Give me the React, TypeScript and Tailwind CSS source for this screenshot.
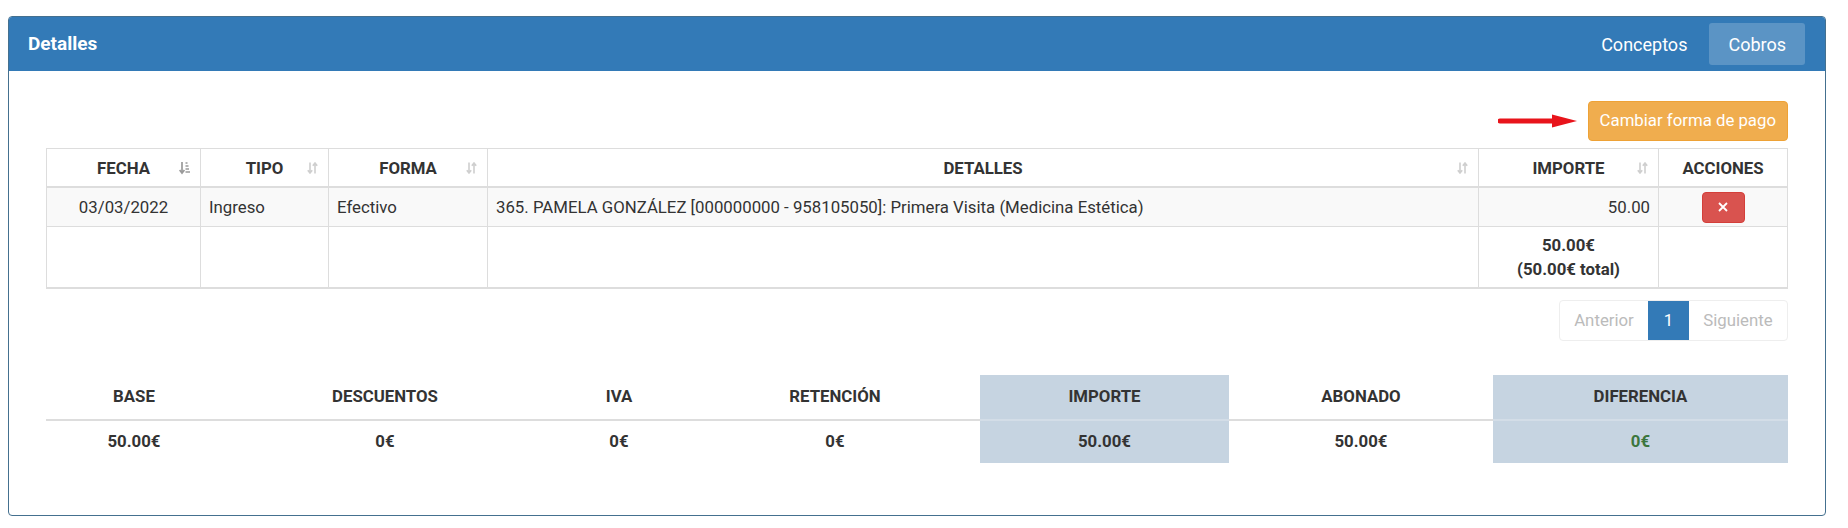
import React from 'react';

const font = "font-['Roboto','Liberation_Sans',sans-serif]";

function SortBoth() {
  return (
    <svg width="11" height="14" viewBox="0 0 11 14" className="text-[#cfcfcf]">
      <path d="M3 1.5v10M0.8 9.3L3 12l2.2-2.7" fill="none" stroke="currentColor" strokeWidth="1.6" />
      <path d="M8 12.5v-10M5.8 4.7L8 2l2.2 2.7" fill="none" stroke="currentColor" strokeWidth="1.6" />
    </svg>
  );
}

function SortAsc() {
  return (
    <svg width="11" height="14" viewBox="0 0 11 14" className="text-[#9a9a9a]">
      <path d="M3 1v10.5M0.6 9L3 12.2 5.4 9" fill="none" stroke="currentColor" strokeWidth="1.7" />
      <path d="M6.5 2h2M6.5 5h3M6.5 8h3.5M6.5 11h4.5" fill="none" stroke="currentColor" strokeWidth="1.3" />
    </svg>
  );
}

function Th({ label, sort, className = '' }: { label: string; sort?: 'both' | 'asc'; className?: string }) {
  return (
    <th className={`relative border border-[#ddd] border-b-2 pt-[7px] pb-[6px] px-[8px] text-center font-bold ${className}`}>
      {label}
      {sort && (
        <span className="absolute right-[10px] top-[12px]">
          {sort === 'asc' ? <SortAsc /> : <SortBoth />}
        </span>
      )}
    </th>
  );
}

const resumen = [
  { label: 'BASE', value: '50.00€', w: 'w-[176px]' },
  { label: 'DESCUENTOS', value: '0€', w: 'w-[326px]' },
  { label: 'IVA', value: '0€', w: 'w-[142px]' },
  { label: 'RETENCIÓN', value: '0€', w: 'w-[290px]' },
  { label: 'IMPORTE', value: '50.00€', w: 'w-[249px]', hl: true },
  { label: 'ABONADO', value: '50.00€', w: 'w-[264px]' },
  { label: 'DIFERENCIA', value: '0€', w: 'w-[295px]', hl: true, green: true },
];

export default function App() {
  return (
    <div className={`${font} min-h-[528px] bg-white pt-4 pl-2 pr-[22px] text-[16.8px] text-[#333]`}>
      <div className="overflow-hidden rounded-[4px] border border-[#44708f]">
        {/* cabecera */}
        <div className="flex h-[54px] items-center justify-between bg-[#337ab7] pl-[19px] pr-[20px] text-white">
          <h3 className="text-[19px] font-bold">Detalles</h3>
          <div className="flex gap-[3px] text-[18px]">
            <button className="h-[42px] rounded-[3px] px-[19px]">Conceptos</button>
            <button className="h-[42px] rounded-[3px] bg-[#5b94c5] px-[19px]">Cobros</button>
          </div>
        </div>

        <div className="px-[37px] pt-[30px] pb-[52px]">
          <div className="flex items-center justify-end gap-[10px]">
            <svg width="80" height="16" viewBox="0 0 80 16">
              <path d="M2 8h54" stroke="#e8141b" strokeWidth="5" strokeLinecap="round" />
              <path d="M54 1.5L79 8 54 14.5z" fill="#e8141b" />
            </svg>
            <button className="h-[40px] rounded-[4px] border border-[#eea236] bg-[#f0ad4e] px-[11px] text-white">
              Cambiar forma de pago
            </button>
          </div>

          <table className="mt-[7px] w-full table-fixed border-collapse leading-[24px]">
            <thead>
              <tr>
                <Th label="FECHA" sort="asc" className="w-[154px]" />
                <Th label="TIPO" sort="both" className="w-[128px]" />
                <Th label="FORMA" sort="both" className="w-[159px]" />
                <Th label="DETALLES" sort="both" />
                <Th label="IMPORTE" sort="both" className="w-[180px]" />
                <Th label="ACCIONES" className="w-[129px]" />
              </tr>
            </thead>
            <tbody>
              <tr className="bg-[#f9f9f9]">
                <td className="border border-[#ddd] px-[8px] py-[7px] text-center">03/03/2022</td>
                <td className="border border-[#ddd] px-[8px] py-[7px]">Ingreso</td>
                <td className="border border-[#ddd] px-[8px] py-[7px]">Efectivo</td>
                <td className="border border-[#ddd] px-[8px] py-[7px] whitespace-nowrap">
                  365. PAMELA GONZÁLEZ [000000000 - 958105050]: Primera Visita (Medicina Estética)
                </td>
                <td className="border border-[#ddd] px-[8px] py-[7px] text-right">50.00</td>
                <td className="border border-[#ddd] px-[8px] py-[3px] text-center">
                  <button className="inline-flex h-[31px] w-[43px] items-center justify-center rounded-[4px] border border-[#d43f3a] bg-[#d9534f] align-middle">
                    <svg width="10" height="10" viewBox="0 0 10 10">
                      <path d="M1 1l8 8M9 1L1 9" stroke="white" strokeWidth="1.8" />
                    </svg>
                  </button>
                </td>
              </tr>
              <tr>
                <td className="border border-[#ddd] border-b-2" />
                <td className="border border-[#ddd] border-b-2" />
                <td className="border border-[#ddd] border-b-2" />
                <td className="border border-[#ddd] border-b-2" />
                <td className="border border-[#ddd] border-b-2 px-[8px] py-[6px] text-center font-bold">
                  50.00€
                  <br />
                  (50.00€ total)
                </td>
                <td className="border border-[#ddd] border-b-2" />
              </tr>
            </tbody>
          </table>

          <div className="mt-[11px] flex justify-end">
            <div className="flex h-[41px] overflow-hidden rounded-[4px] border border-[#eee] text-[#bbb]">
              <span className="flex w-[88px] items-center justify-center">Anterior</span>
              <span className="flex w-[41px] items-center justify-center bg-[#337ab7] text-white">1</span>
              <span className="flex w-[98px] items-center justify-center">Siguiente</span>
            </div>
          </div>

          <table className="mt-[34px] w-full table-fixed border-collapse font-bold">
            <thead>
              <tr>
                {resumen.map((r) => (
                  <th
                    key={r.label}
                    className={`${r.w} h-[45px] border-b-2 text-center ${r.hl ? 'border-[#d3dde7] bg-[#c6d4e1]' : 'border-[#ddd]'}`}
                  >
                    {r.label}
                  </th>
                ))}
              </tr>
            </thead>
            <tbody>
              <tr>
                {resumen.map((r) => (
                  <td
                    key={r.label}
                    className={`h-[43px] text-center ${r.hl ? 'bg-[#c6d4e1]' : ''} ${r.green ? 'text-[#3c763d]' : ''}`}
                  >
                    {r.value}
                  </td>
                ))}
              </tr>
            </tbody>
          </table>
        </div>
      </div>
    </div>
  );
}
